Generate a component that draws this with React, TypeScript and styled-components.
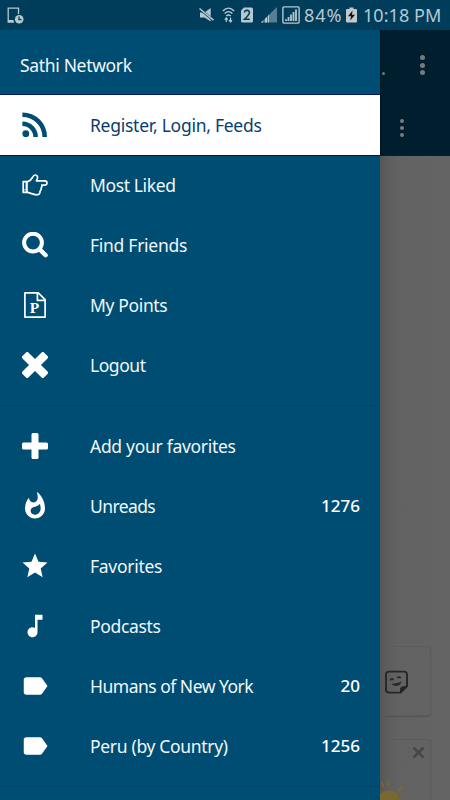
import React from "react";
import styled, { createGlobalStyle } from "styled-components";
import { MdWhatshot, MdStar, MdMusicNote, MdLabel } from "react-icons/md";

const Global = createGlobalStyle`
  * { box-sizing: border-box; }
  body { margin: 0; font-family: "Noto Sans", "Open Sans", sans-serif; background: #626262; }
`;

const Screen = styled.div`
  width: 450px;
  height: 800px;
  overflow: hidden;
  display: flex;
  flex-direction: column;
`;

const StatusBar = styled.header`
  height: 30px;
  flex: none;
  display: flex;
  align-items: center;
  justify-content: space-between;
  padding: 0 9px 0 7px;
  background: #003d5b;
  color: #b6c8d1;
`;

const StatusGroup = styled.div`
  display: flex;
  align-items: center;
`;

const StatusIcon = styled.svg<{ $gap: number }>`
  display: block;
  flex: none;
  margin-right: ${(p) => p.$gap}px;
`;

const StatusText = styled.span<{ $width: number; $gap?: number; $spacing: number }>`
  width: ${(p) => p.$width}px;
  margin-right: ${(p) => p.$gap ?? 0}px;
  letter-spacing: ${(p) => p.$spacing}px;
  font-size: 18px;
  line-height: 30px;
  white-space: nowrap;
`;

const Body = styled.div`
  flex: 1;
  min-height: 0;
  display: flex;
`;

const Drawer = styled.nav`
  width: 380px;
  flex: none;
  overflow: hidden;
  background: #004d73;
  color: #f2f7f9;
`;

const DrawerTitle = styled.h1<{ $spacing: number }>`
  margin: 5px 0 0;
  height: 59px;
  padding: 0 20px;
  border-top: 1px solid #00476a;
  font-size: 17.5px;
  font-weight: 400;
  line-height: 59px;
  letter-spacing: ${(p) => p.$spacing}px;
`;

const MenuList = styled.ul`
  list-style: none;
  margin: 0;
  padding: 0;
`;

const MenuRow = styled.li<{ $selected?: boolean }>`
  height: ${(p) => (p.$selected ? 62 : 60)}px;
  margin-bottom: ${(p) => (p.$selected ? -1 : 0)}px;
  display: grid;
  grid-template-columns: 70px 1fr auto;
  align-items: center;
  padding: 0 20px 0 0;
  border: 0 solid #00175c;
  border-width: ${(p) => (p.$selected ? "1px 0" : "0")};
  background: ${(p) => (p.$selected ? "#fff" : "transparent")};
  color: ${(p) => (p.$selected ? "#083d70" : "inherit")};
`;

const IconCell = styled.span<{ $selected?: boolean }>`
  display: grid;
  place-items: center;
  color: ${(p) => (p.$selected ? "#004d73" : "#fff")};
  svg { display: block; }
`;

const Label = styled.span<{ $spacing: number }>`
  padding-left: 20px;
  font-size: 17.5px;
  line-height: 24px;
  white-space: nowrap;
  letter-spacing: ${(p) => p.$spacing}px;
`;

const Count = styled.span`
  font-size: 17px;
  font-weight: 500;
  line-height: 24px;
  color: #fff;
`;

const Divider = styled.hr`
  height: 1px;
  margin: 10px 0;
  border: 0;
  background: #00466a;
`;

const Page = styled.main`
  flex: 1;
  display: flex;
  flex-direction: column;
  overflow: hidden;
  background: linear-gradient(90deg, #555 0, #5c5c5c 6px, #626262 18px, #646464 100%);
`;

const PageBar = styled.div`
  height: 126px;
  flex: none;
  display: flex;
  flex-direction: column;
  background: #001f2e;
  border-left: 1px solid #00131f;
  border-bottom: 1px solid #101d27;
`;

const PageBarRow = styled.div<{ $height: number; $padding: string }>`
  height: ${(p) => p.$height}px;
  display: flex;
  align-items: flex-start;
  justify-content: space-between;
  padding: ${(p) => p.$padding};
`;

const Dots = styled.div<{ $size: number; $gap: number }>`
  display: flex;
  flex-direction: column;
  gap: ${(p) => p.$gap}px;
  i {
    width: ${(p) => p.$size}px;
    height: ${(p) => p.$size}px;
    border-radius: 50%;
    background: #777a7c;
  }
`;

const TitleEnd = styled.i`
  width: 3px;
  height: 3px;
  margin-top: 17px;
  border-radius: 50%;
  background: #70777b;
`;

const Card = styled.section<{ $height: number; $top: number }>`
  width: 51px;
  height: ${(p) => p.$height}px;
  margin-top: ${(p) => p.$top}px;
  flex: none;
  border: 1px solid #5b5b5b;
  border-left: 0;
  border-radius: 0 4px 4px 0;
  box-shadow: 0 1px 1px #555;
  overflow: hidden;
  svg { display: block; }
`;

const StickerSlot = styled.div`
  padding: 23px 0 0 4px;
`;

const CloseSlot = styled.div`
  padding: 6px 0 0 32px;
`;

const SunSlot = styled.div`
  padding-top: 21px;
`;

const RssIcon = () => (
  <svg width="26" height="26" viewBox="0 0 26 26" fill="none" stroke="currentColor" strokeWidth="4.6">
    <circle cx="3.8" cy="21.7" r="3.4" fill="currentColor" stroke="none" />
    <path d="M.4 11.8A13.2 13.2 0 0 1 13.6 25M.4 2.7A22.3 22.3 0 0 1 22.7 25" />
  </svg>
);

const HandIcon = () => (
  <svg width="26" height="22" viewBox="0 0 26 22" fill="none" stroke="currentColor" strokeWidth="1.7" strokeLinejoin="round">
    <path d="M1.2 7.6H5.3C7.5 7.4 9.2 5.5 10.2 3.8C11.2 2 12.2 1 13.3 1C15.2 1 16 2.8 15.3 4.7L14.4 6.9H22.8Q25 7.1 25 9Q24.9 11 22.8 11.1H19.8Q20.2 12.8 19.2 14.1Q19.5 16 18 17.4Q18.2 20.8 14.8 20.8C10.8 20.8 8.3 18.9 5.4 18.4H1.2Z" />
    <path d="M4.7 7.6V18.4" strokeWidth="2.2" />
    <circle cx="3" cy="15.7" r=".7" fill="currentColor" stroke="none" />
  </svg>
);

const SearchIcon = () => (
  <svg width="26" height="26" viewBox="0 0 26 26" fill="none" stroke="currentColor" strokeWidth="4">
    <circle cx="11" cy="10.6" r="8.9" />
    <path d="M17.5 17.1L23.6 23.2" strokeWidth="4.4" strokeLinecap="round" />
  </svg>
);

const PointsIcon = () => (
  <svg width="22" height="26" viewBox="0 0 22 26" fill="none" stroke="currentColor" strokeWidth="1.7" strokeLinejoin="round">
    <path d="M.9.9H14.3L21.1 7.6V25.1H.9Z" />
    <path d="M13.4 1V8.4H21" />
    <text x="5.8" y="21.4" fontFamily="Liberation Serif, serif" fontWeight="700" fontSize="15.5" fill="currentColor" stroke="none">P</text>
  </svg>
);

const CrossIcon = () => (
  <svg width="26" height="26" viewBox="0 0 26 26" fill="currentColor">
    <g transform="rotate(45 13 13)">
      <rect x="-2.2" y="8.8" width="30.4" height="8.4" rx="1.7" />
      <rect x="8.8" y="-2.2" width="8.4" height="30.4" rx="1.7" />
    </g>
  </svg>
);

const PlusIcon = () => (
  <svg width="26" height="26" viewBox="0 0 26 26" fill="currentColor">
    <rect y="9.5" width="26" height="7" rx="1.5" />
    <rect x="9.5" width="7" height="26" rx="1.5" />
  </svg>
);

const StickerIcon = () => (
  <svg width="24" height="24" viewBox="0 0 24 24" fill="none" stroke="#262626" strokeWidth="1.9">
    <path d="M5 1.6H20Q23 1.6 23 4.6V16L16.5 22.6H5Q2 22.6 2 19.6V4.6Q2 1.6 5 1.6Z" />
    <path d="M16.5 22.5V19Q16.5 17 19 16.8H23Z" fill="#262626" strokeWidth="1" />
    <path d="M6 10.3Q7.7 8.4 9.6 9.8M13.3 8Q15 6.2 16.8 7.8" strokeWidth="1.7" />
    <path d="M7.6 13.8Q14 13.6 17.5 11.3Q16.7 15.8 12 16Q9.5 16 7.6 13.8Z" fill="#262626" stroke="none" />
  </svg>
);

const CloseIcon = () => (
  <svg width="13" height="13" viewBox="0 0 13 13" stroke="#484848" strokeWidth="2.8">
    <path d="M1.5 1.5L11.5 11.5M11.5 1.5L1.5 11.5" />
  </svg>
);

const SunIcon = () => (
  <svg width="30" height="30" viewBox="0 0 30 30" stroke="#80692a" strokeWidth="1.6" strokeLinecap="round">
    <circle cx="8.5" cy="22" r="11.5" fill="#7b682e" stroke="none" />
    <path d="M8.5 1V6M1.8 2.5L3.2 6.5M18.5 10.5L22.3 6.5M22 15.3L23.6 14.6" />
  </svg>
);

interface Entry {
  label: string;
  spacing: number;
  icon: React.ReactNode;
  count?: string;
  selected?: boolean;
}

const primary: Entry[] = [
  { label: "Register, Login, Feeds", spacing: -0.26, icon: <RssIcon />, selected: true },
  { label: "Most Liked", spacing: -0.38, icon: <HandIcon /> },
  { label: "Find Friends", spacing: -0.28, icon: <SearchIcon /> },
  { label: "My Points", spacing: -0.36, icon: <PointsIcon /> },
  { label: "Logout", spacing: -0.45, icon: <CrossIcon /> },
];

const feeds: Entry[] = [
  { label: "Add your favorites", spacing: -0.3, icon: <PlusIcon /> },
  { label: "Unreads", spacing: -0.6, icon: <MdWhatshot size={30} />, count: "1276" },
  { label: "Favorites", spacing: -0.28, icon: <MdStar size={30} /> },
  { label: "Podcasts", spacing: -0.33, icon: <MdMusicNote size={30} /> },
  { label: "Humans of New York", spacing: -0.5, icon: <MdLabel size={30} />, count: "20" },
  { label: "Peru (by Country)", spacing: -0.32, icon: <MdLabel size={30} />, count: "1256" },
];

const Menu = ({ entries }: { entries: Entry[] }) => (
  <MenuList>
    {entries.map((e) => (
      <MenuRow key={e.label} $selected={e.selected}>
        <IconCell $selected={e.selected}>{e.icon}</IconCell>
        <Label $spacing={e.spacing}>{e.label}</Label>
        {e.count && <Count>{e.count}</Count>}
      </MenuRow>
    ))}
  </MenuList>
);

const Overflow = ({ size, gap }: { size: number; gap: number }) => (
  <Dots $size={size} $gap={gap}><i /><i /><i /></Dots>
);

export default function App() {
  return (
    <Screen>
      <Global />
      <StatusBar>
        <StatusIcon $gap={0} width="17" height="17" viewBox="0 0 17 17" fill="none" stroke="currentColor" strokeWidth="1.3">
          <path d="M11.5 7V1.2H1.2V15H7M1.2 13.7H6.5" />
          <circle cx="12.2" cy="12.2" r="4.3" fill="currentColor" stroke="none" />
          <path d="M12 9.5V12.6H14.5" stroke="#003d5b" />
        </StatusIcon>
        <StatusGroup>
          <StatusIcon $gap={8} width="15" height="16" viewBox="0 0 15 16" fill="currentColor">
            <path d="M1 5.5H5.5L11.7 1V14.5L5.5 10.5H1Z" />
            <path d="M1 2L14.5 13.5" stroke="#003d5b" strokeWidth="2.4" />
            <path d="M.5 1.5L14.5 13.2" stroke="currentColor" strokeWidth="1.6" />
          </StatusIcon>
          <StatusIcon $gap={6} width="13" height="16" viewBox="0 0 13 16" fill="none" stroke="currentColor" strokeWidth="1.4">
            <path d="M.8 4Q6.5-1.8 12.2 4M2.6 6.6Q6.5 2.6 10.4 6.6M4.3 9Q6.5 6.8 8.7 9" />
            <path d="M4.3 15V11M8.5 10.5V14.5M2.8 12.7L4.3 11L5.8 12.7M7 13.2L8.5 15L10 13.2" strokeWidth="1.2" />
          </StatusIcon>
          <StatusIcon $gap={8} width="12" height="16" viewBox="0 0 12 16">
            <path d="M3 .5H10.5Q12 .5 12 2V14Q12 15.5 10.5 15.5H1.5Q0 15.5 0 14V3.5Z" fill="currentColor" />
            <path d="M3.5 5.5Q3.7 3.3 6 3.3Q8.5 3.4 8.4 5.7Q8.3 7.4 3.5 12.2H8.8" fill="none" stroke="#003d5b" strokeWidth="1.6" />
          </StatusIcon>
          <StatusIcon $gap={5} width="16" height="16" viewBox="0 0 16 16" fill="currentColor">
            <path d="M0 15.5L16 0V15.5Z" opacity=".48" />
            <path d="M0 15.5L1.8 13.5V15.5ZM4 15.5V11.7L6 9.7V15.5ZM7 15.5V8.7L8 7.7V15.5Z" />
          </StatusIcon>
          <StatusIcon $gap={4} width="18" height="18" viewBox="0 0 18 18" fill="none" stroke="currentColor" strokeWidth="1.4">
            <rect x=".9" y=".9" width="16.2" height="16.2" rx="1" />
            <path d="M4 15V13.3M6.5 15V11M9 15V8.5M11.5 15V6M14 15V3.5" strokeWidth="1.8" />
          </StatusIcon>
          <StatusText $width={38} $gap={4} $spacing={0.9}>84%</StatusText>
          <StatusIcon $gap={6} width="11" height="16" viewBox="0 0 11 16" fill="currentColor">
            <path d="M3.5.5H7.5V2H10Q11 2 11 3V14.5Q11 15.5 10 15.5H1Q0 15.5 0 14.5V3Q0 2 1 2H3.5Z" fill="#c3c9ca" />
            <path d="M6.5 3.5L2 9.3H5L4.3 13.5L9 7.8H6Z" fill="#001c2a" />
          </StatusIcon>
          <StatusText $width={78} $spacing={0.05}>10:18 PM</StatusText>
        </StatusGroup>
      </StatusBar>
      <Body>
        <Drawer>
          <DrawerTitle $spacing={-0.33}>Sathi Network</DrawerTitle>
          <Menu entries={primary} />
          <Divider />
          <Menu entries={feeds} />
          <Divider />
        </Drawer>
        <Page>
          <PageBar>
            <PageBarRow $height={64} $padding="25px 25px 0 1px">
              <TitleEnd />
              <Overflow size={5} gap={2.5} />
            </PageBarRow>
            <PageBarRow $height={60} $padding="25px 44px 0 19px">
              <Overflow size={4} gap={3} />
            </PageBarRow>
          </PageBar>
          <Card $height={70} $top={490}>
            <StickerSlot><StickerIcon /></StickerSlot>
          </Card>
          <Card $height={90} $top={23}>
            <CloseSlot><CloseIcon /></CloseSlot>
            <SunSlot><SunIcon /></SunSlot>
          </Card>
        </Page>
      </Body>
    </Screen>
  );
}
